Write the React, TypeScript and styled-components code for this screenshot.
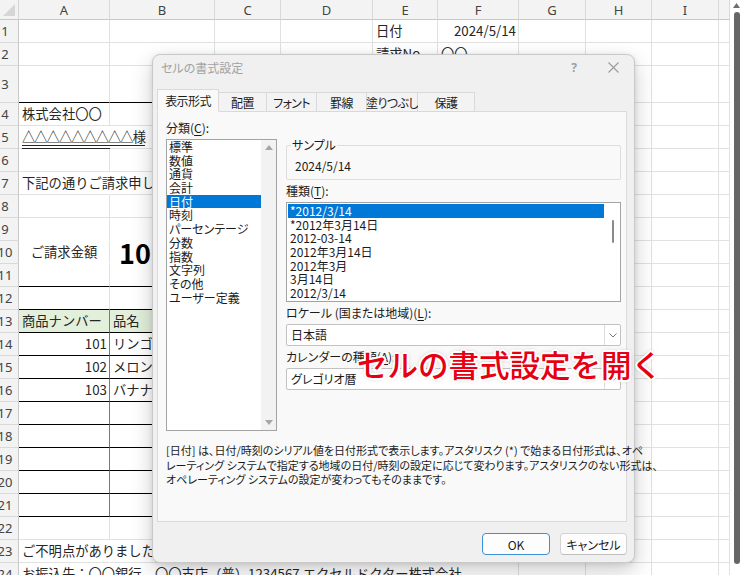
import React from "react";
import styled, { createGlobalStyle } from "styled-components";

const GlobalStyle = createGlobalStyle`
  html, body {
    margin: 0;
    padding: 0;
    background: #ffffff;
    overflow: hidden;
  }
  body {
    font-family: "Noto Sans CJK JP", "Noto Sans", sans-serif;
  }
`;

const COLUMNS = [
  { key: "A", w: 91 },
  { key: "B", w: 105 },
  { key: "C", w: 66 },
  { key: "D", w: 92 },
  { key: "E", w: 65 },
  { key: "F", w: 81 },
  { key: "G", w: 67 },
  { key: "H", w: 66 },
  { key: "I", w: 67 },
  { key: "J", w: 11 },
];

const ROW_COUNT = 24;
const rowHeight = (r: number) => (r === 3 ? 37 : 23);

type CellSpec = {
  text: string;
  align?: "left" | "right" | "center";
  bold?: boolean;
  size?: number;
  double?: boolean;
};

const CONTENT: Record<string, CellSpec> = {
  E1: { text: "日付" },
  F1: { text: "2024/5/14", align: "right" },
  E2: { text: "請求No." },
  F2: { text: "〇〇" },
  A4: { text: "株式会社〇〇" },
  A5: { text: "△△△△△△△△△様", double: true },
  A7: { text: "下記の通りご請求申し上げます。" },
  A10: { text: "ご請求金額", align: "center" },
  B10: { text: "10,890円", bold: true, size: 27 },
  A13: { text: "商品ナンバー" },
  B13: { text: "品名" },
  A14: { text: "101", align: "right" },
  B14: { text: "リンゴ" },
  A15: { text: "102", align: "right" },
  B15: { text: "メロン" },
  A16: { text: "103", align: "right" },
  B16: { text: "バナナ" },
  A23: { text: "ご不明点がありましたら、お気軽にお問い合わせください。" },
  A24: { text: "お振込先：〇〇銀行　〇〇支店（普）1234567 エクセルドクター株式会社" },
};

const GRID = "#e1e1e1";

const cellLines = (col: string, row: number) => {
  const inTable = col === "A" || col === "B";
  let bottom = GRID;
  let right = GRID;
  if (inTable && (row === 3 || (row >= 11 && row <= 21))) bottom = "#000000";
  if (inTable && (row === 9 || row === 10)) bottom = "transparent";
  if (col === "A" && row >= 13 && row <= 21) right = "#7a7a7a";
  if (col === "A" && (row === 5 || row === 7 || row === 23)) right = "transparent";
  if (row === 24 && "ABCDE".includes(col)) right = "transparent";
  const bg = inTable && row === 13 ? "#e2efda" : "transparent";
  return { bottom, right, bg };
};

const Screen = styled.div`
  position: relative;
  width: 740px;
  height: 575px;
  overflow: hidden;
  display: flex;
  background: #ffffff;
`;

const Sheet = styled.div<{ $cols: string; $rows: string }>`
  display: grid;
  grid-template-columns: ${(p) => p.$cols};
  grid-template-rows: ${(p) => p.$rows};
  width: 730px;
  flex: none;
  align-content: start;
`;

const Corner = styled.div`
  box-sizing: border-box;
  background: #f3f3f3;
  border-right: 1px solid #d4d4d4;
  border-bottom: 1px solid #c8c8c8;
  display: flex;
  align-items: flex-end;
  justify-content: flex-end;
  padding: 0 3px 3px 0;
`;

const ColHead = styled.div`
  box-sizing: border-box;
  background: #f3f3f3;
  border-right: 1px solid #d9d9d9;
  border-bottom: 1px solid #c8c8c8;
  display: flex;
  align-items: center;
  justify-content: center;
  font-family: "Noto Sans", "Liberation Sans", sans-serif;
  font-size: 13px;
  color: #444444;
  overflow: hidden;
`;

const RowHead = styled.div`
  box-sizing: border-box;
  background: #f3f3f3;
  border-right: 1px solid #c8c8c8;
  border-bottom: 1px solid #d9d9d9;
  display: flex;
  align-items: center;
  justify-content: center;
  padding-right: 8px;
  font-family: "Noto Sans", "Liberation Sans", sans-serif;
  font-size: 13px;
  color: #444444;
  overflow: hidden;
  white-space: nowrap;
`;

const Cell = styled.div<{
  $align: string;
  $bottom: string;
  $right: string;
  $bg: string;
}>`
  box-sizing: border-box;
  min-width: 0;
  border-right: 1px solid ${(p) => p.$right};
  border-bottom: 1px solid ${(p) => p.$bottom};
  background: ${(p) => p.$bg};
  display: flex;
  align-items: center;
  justify-content: ${(p) =>
    p.$align === "right" ? "flex-end" : p.$align === "center" ? "center" : "flex-start"};
  padding: ${(p) => (p.$align === "right" ? "0 2px 0 3px" : "0 3px")};
  white-space: nowrap;
`;

const CellText = styled.span<{ $bold?: boolean; $size?: number; $double?: boolean }>`
  font-family: "Noto Sans CJK JP", "Noto Sans", sans-serif;
  font-size: ${(p) => p.$size ?? 13.3}px;
  font-weight: ${(p) => (p.$bold ? 700 : 400)};
  color: ${(p) => (p.$bold ? "#000000" : "#262626")};
  margin-left: ${(p) => (p.$bold ? "6px" : "0")};
  letter-spacing: ${(p) => (p.$double ? "-1px" : "0")};
  text-decoration: ${(p) => (p.$double ? "underline double" : "none")};
  text-underline-offset: 3px;
  line-height: 1;
`;

const ScrollTrack = styled.div`
  flex: none;
  width: 10px;
  height: 575px;
  display: flex;
  flex-direction: column;
  align-items: flex-end;
  padding-top: 3px;
  box-sizing: border-box;
`;

const ScrollThumb = styled.div`
  width: 6px;
  height: 552px;
  margin-top: 4px;
  background: #666666;
  border-radius: 3px;
`;

/* ---------- dialog ---------- */

const Dialog = styled.div`
  position: absolute;
  left: 152px;
  top: 54px;
  width: 483px;
  height: 509px;
  box-sizing: border-box;
  border: 1px solid #c9c9c9;
  border-radius: 8px;
  background: #f0f0f0;
  box-shadow: 0 8px 22px rgba(0, 0, 0, 0.2), 0 1px 5px rgba(0, 0, 0, 0.1);
  display: flex;
  flex-direction: column;
  padding: 0 7px 0 4px;
  font-family: "Noto Sans CJK JP", "Noto Sans", sans-serif;
  font-feature-settings: "palt";
  color: #1b1b1b;
`;

const TitleBar = styled.div`
  height: 24px;
  margin-bottom: 10px;
  display: flex;
  align-items: center;
  padding-left: 4px;
`;

const TitleText = styled.div`
  flex: 1;
  font-size: 12px;
  color: #a2a2a2;
`;

const HelpGlyph = styled.div`
  font-family: "Noto Sans", sans-serif;
  font-size: 12px;
  font-weight: 700;
  color: #a0a0a0;
  margin-right: 31px;
`;

const CloseIcon = styled.svg`
  margin-right: 8px;
`;

const TabRow = styled.div`
  position: relative;
  z-index: 1;
  height: 23px;
  margin-bottom: -1px;
  display: flex;
  align-items: flex-end;
`;

const Tab = styled.div<{ $active?: boolean; $w: number; $first?: boolean }>`
  box-sizing: border-box;
  width: ${(p) => p.$w}px;
  height: ${(p) => (p.$active ? 23 : 20)}px;
  border-top: 1px solid #d9d9d9;
  border-right: 1px solid #d9d9d9;
  border-left: ${(p) => (p.$first ? "1px solid #d9d9d9" : "none")};
  border-bottom: 1px solid ${(p) => (p.$active ? "#f9f9f9" : "#d9d9d9")};
  background: ${(p) => (p.$active ? "#f9f9f9" : "#f3f3f3")};
  display: flex;
  align-items: center;
  justify-content: center;
  font-size: 12px;
  letter-spacing: -0.6px;
  color: #1b1b1b;
  white-space: nowrap;
`;

const Panel = styled.div`
  box-sizing: border-box;
  height: 411px;
  border: 1px solid #dadada;
  background: #f9f9f9;
  padding: 8px 6px 0 8px;
`;

const PanelGrid = styled.div`
  display: grid;
  grid-template-columns: 111px 335px;
  column-gap: 9px;
`;

const Column = styled.div`
  display: flex;
  flex-direction: column;
`;

const Label = styled.div<{ $gap?: number }>`
  font-size: 12px;
  line-height: 16px;
  height: 16px;
  margin-top: ${(p) => p.$gap ?? 0}px;
  margin-bottom: 3px;
  white-space: nowrap;
`;

const Key = styled.span`
  text-decoration: underline;
  text-underline-offset: 2px;
`;

const ListBox = styled.div<{ $h: number }>`
  box-sizing: border-box;
  height: ${(p) => p.$h}px;
  border: 1px solid #a3a3a3;
  background: #ffffff;
  display: flex;
  overflow: hidden;
`;

const ListItems = styled.div<{ $pad: number }>`
  flex: 1;
  padding: ${(p) => p.$pad}px;
  min-width: 0;
`;

const ListItem = styled.div<{ $selected?: boolean }>`
  height: 13.7px;
  line-height: 13.7px;
  padding-left: 2px;
  font-size: 12px;
  white-space: nowrap;
  background: ${(p) => (p.$selected ? "#0078d7" : "transparent")};
  color: ${(p) => (p.$selected ? "#ffffff" : "#1b1b1b")};
`;

const ArrowBar = styled.div`
  width: 15px;
  flex: none;
  background: #f2f2f2;
  display: flex;
  flex-direction: column;
  justify-content: space-between;
  align-items: center;
  padding: 5px 0;
  box-sizing: border-box;
`;

const ThinBar = styled.div`
  width: 15px;
  flex: none;
  display: flex;
  justify-content: center;
  padding-top: 17px;
  box-sizing: border-box;
`;

const ThinThumb = styled.div`
  width: 2px;
  height: 23px;
  border-radius: 1px;
  background: #8a8a8a;
`;

const Group = styled.fieldset`
  margin: 17px 0 0 0;
  padding: 5px 8px 5px 8px;
  border: 1px solid #dedede;
  border-radius: 2px;
  min-width: 0;
  font-size: 12px;
  line-height: 16px;
`;

const GroupTitle = styled.legend`
  padding: 0 1px;
  margin-left: -4px;
  font-size: 12px;
  line-height: 16px;
`;

const SelectBox = styled.div`
  box-sizing: border-box;
  height: 22px;
  border: 1px solid #c2c2c2;
  border-radius: 2px;
  background: #ffffff;
  display: flex;
`;

const SelectValue = styled.div`
  flex: 1;
  padding-left: 4px;
  font-size: 12px;
  line-height: 20px;
`;

const SelectButton = styled.div`
  width: 15px;
  border-left: 1px solid #dcdcdc;
  display: flex;
  align-items: center;
  justify-content: center;
`;

const Description = styled.div`
  margin-top: 12px;
  font-size: 11px;
  line-height: 14.5px;
  white-space: nowrap;
  color: #1b1b1b;
`;

const Footer = styled.div`
  flex: 1;
  display: flex;
  justify-content: flex-end;
  align-items: flex-start;
  gap: 10px;
  padding-top: 11px;
`;

const Button = styled.div<{ $primary?: boolean; $w: number }>`
  box-sizing: border-box;
  width: ${(p) => p.$w}px;
  height: 22px;
  border: 1px solid ${(p) => (p.$primary ? "#3d8fd6" : "#d3d3d3")};
  border-bottom-color: ${(p) => (p.$primary ? "#3d8fd6" : "#bdbdbd")};
  border-radius: 4px;
  background: #fdfdfd;
  display: flex;
  align-items: center;
  justify-content: center;
  font-size: 12px;
  color: #1b1b1b;
`;

const Callout = styled.div`
  position: absolute;
  left: 357px;
  top: 349px;
  font-family: "Noto Sans CJK JP", sans-serif;
  font-size: 30.5px;
  line-height: 30px;
  font-weight: 500;
  color: #e60012;
  white-space: nowrap;
  text-shadow: 2px 0 #fff, -2px 0 #fff, 0 2px #fff, 0 -2px #fff,
    1.5px 1.5px #fff, -1.5px 1.5px #fff, 1.5px -1.5px #fff, -1.5px -1.5px #fff,
    0 0 5px rgba(0, 0, 0, 0.35);
`;

const TABS = [
  { label: "表示形式", w: 62 },
  { label: "配置", w: 48 },
  { label: "フォント", w: 50 },
  { label: "罫線", w: 50 },
  { label: "塗りつぶし", w: 51 },
  { label: "保護", w: 57 },
];

const CATEGORIES = [
  "標準",
  "数値",
  "通貨",
  "会計",
  "日付",
  "時刻",
  "パーセンテージ",
  "分数",
  "指数",
  "文字列",
  "その他",
  "ユーザー定義",
];

const TYPES = [
  "*2012/3/14",
  "*2012年3月14日",
  "2012-03-14",
  "2012年3月14日",
  "2012年3月",
  "3月14日",
  "2012/3/14",
];

const Chevron = () => (
  <svg width="8" height="5" viewBox="0 0 8 5">
    <path d="M0.5 0.5 L4 4 L7.5 0.5" fill="none" stroke="#7a7a7a" strokeWidth="1" />
  </svg>
);

const FormatDialog = () => (
  <Dialog>
    <TitleBar>
      <TitleText>セルの書式設定</TitleText>
      <HelpGlyph>?</HelpGlyph>
      <CloseIcon width="11" height="11" viewBox="0 0 11 11">
        <path d="M0.5 0.5 L10.5 10.5 M10.5 0.5 L0.5 10.5" stroke="#9a9a9a" strokeWidth="1.1" />
      </CloseIcon>
    </TitleBar>
    <TabRow>
      {TABS.map((t, i) => (
        <Tab key={t.label} $w={t.w} $first={i === 0} $active={i === 0}>
          {t.label}
        </Tab>
      ))}
    </TabRow>
    <Panel>
      <PanelGrid>
        <Column>
          <Label>
            分類(<Key>C</Key>):
          </Label>
          <ListBox $h={292}>
            <ListItems $pad={0}>
              {CATEGORIES.map((c, i) => (
                <ListItem key={c} $selected={i === 4}>
                  {c}
                </ListItem>
              ))}
            </ListItems>
            <ArrowBar>
              <svg width="8" height="5" viewBox="0 0 8 5">
                <path d="M0 5 L4 0 L8 5 Z" fill="#a6a6a6" />
              </svg>
              <svg width="8" height="5" viewBox="0 0 8 5">
                <path d="M0 0 L4 5 L8 0 Z" fill="#a6a6a6" />
              </svg>
            </ArrowBar>
          </ListBox>
        </Column>
        <Column>
          <Group>
            <GroupTitle>サンプル</GroupTitle>
            2024/5/14
          </Group>
          <Label $gap={3}>
            種類(<Key>T</Key>):
          </Label>
          <ListBox $h={100}>
            <ListItems $pad={1}>
              {TYPES.map((t, i) => (
                <ListItem key={t + i} $selected={i === 0}>
                  {t}
                </ListItem>
              ))}
            </ListItems>
            <ThinBar>
              <ThinThumb />
            </ThinBar>
          </ListBox>
          <Label $gap={3}>
            ロケール (国または地域)(<Key>L</Key>):
          </Label>
          <SelectBox>
            <SelectValue>日本語</SelectValue>
            <SelectButton>
              <Chevron />
            </SelectButton>
          </SelectBox>
          <Label $gap={3}>
            カレンダーの種類(<Key>A</Key>):
          </Label>
          <SelectBox>
            <SelectValue>グレゴリオ暦</SelectValue>
            <SelectButton>
              <Chevron />
            </SelectButton>
          </SelectBox>
        </Column>
      </PanelGrid>
      <Description>
        [日付] は、日付/時刻のシリアル値を日付形式で表示します。アスタリスク (*) で始まる日付形式は、オペ
        <br />
        レーティング システムで指定する地域の日付/時刻の設定に応じて変わります。アスタリスクのない形式は、
        <br />
        オペレーティング システムの設定が変わってもそのままです。
      </Description>
    </Panel>
    <Footer>
      <Button $primary $w={68}>
        OK
      </Button>
      <Button $w={67}>キャンセル</Button>
    </Footer>
  </Dialog>
);

const App = () => {
  const cols = ["19px", ...COLUMNS.map((c) => `${c.w}px`)].join(" ");
  const rows = [
    "20px",
    ...Array.from({ length: ROW_COUNT }, (_, i) => `${rowHeight(i + 1)}px`),
  ].join(" ");

  const cells: React.ReactNode[] = [];
  cells.push(
    <Corner key="corner">
      <svg width="12" height="12" viewBox="0 0 12 12">
        <path d="M12 0 L12 12 L0 12 Z" fill="#d6d6d6" />
      </svg>
    </Corner>
  );
  COLUMNS.forEach((c) =>
    cells.push(<ColHead key={"h" + c.key}>{c.key === "J" ? "" : c.key}</ColHead>)
  );
  for (let r = 1; r <= ROW_COUNT; r++) {
    cells.push(
      <RowHead key={"r" + r}>
        <span>{r}</span>
      </RowHead>
    );
    COLUMNS.forEach((c) => {
      const id = c.key + r;
      const spec = CONTENT[id];
      const line = cellLines(c.key, r);
      cells.push(
        <Cell
          key={id}
          $align={spec?.align ?? "left"}
          $bottom={line.bottom}
          $right={line.right}
          $bg={line.bg}
        >
          {spec && (
            <CellText $bold={spec.bold} $size={spec.size} $double={spec.double}>
              {spec.text}
            </CellText>
          )}
        </Cell>
      );
    });
  }

  return (
    <>
      <GlobalStyle />
      <Screen>
        <Sheet $cols={cols} $rows={rows}>
          {cells}
        </Sheet>
        <ScrollTrack>
          <svg width="7" height="5" viewBox="0 0 7 5">
            <path d="M0 5 L3.5 0 L7 5 Z" fill="#6e6e6e" />
          </svg>
          <ScrollThumb />
        </ScrollTrack>
        <FormatDialog />
        <Callout>セルの書式設定を開く</Callout>
      </Screen>
    </>
  );
};

export default App;
